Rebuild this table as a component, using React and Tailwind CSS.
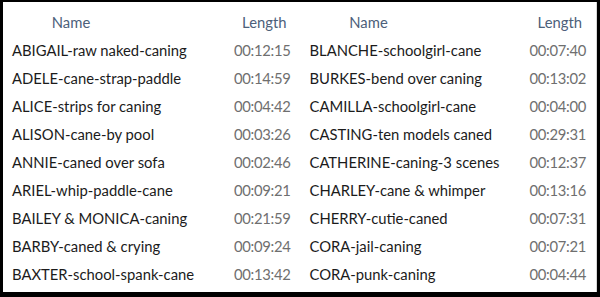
import React from "react";

const left = [
  ["ABIGAIL-raw naked-caning", "00:12:15"],
  ["ADELE-cane-strap-paddle", "00:14:59"],
  ["ALICE-strips for caning", "00:04:42"],
  ["ALISON-cane-by pool", "00:03:26"],
  ["ANNIE-caned over sofa", "00:02:46"],
  ["ARIEL-whip-paddle-cane", "00:09:21"],
  ["BAILEY & MONICA-caning", "00:21:59"],
  ["BARBY-caned & crying", "00:09:24"],
  ["BAXTER-school-spank-cane", "00:13:42"],
];

const right = [
  ["BLANCHE-schoolgirl-cane", "00:07:40"],
  ["BURKES-bend over caning", "00:13:02"],
  ["CAMILLA-schoolgirl-cane", "00:04:00"],
  ["CASTING-ten models caned", "00:29:31"],
  ["CATHERINE-caning-3 scenes", "00:12:37"],
  ["CHARLEY-cane & whimper", "00:13:16"],
  ["CHERRY-cutie-caned", "00:07:31"],
  ["CORA-jail-caning", "00:07:21"],
  ["CORA-punk-caning", "00:04:44"],
];

function Panel({ rows, first }) {
  return (
    <div className={first ? "pl-[9px] pr-[9px]" : "pl-[10px] pr-[10px]"}>
      <div className="flex h-[34px] items-end pb-[3px] text-[#4c607a]">
        <div className="w-[118px] text-center">Name</div>
        <div className="flex-1 text-right pr-[4px]">Length</div>
      </div>
      {rows.map(([name, len]) => (
        <div key={name} className="flex h-[28px] items-center">
          <div className="flex-1 text-[#1b1b1b] whitespace-nowrap">{name}</div>
          <div className="text-right text-[#6f6f6f] tracking-[-0.3px]">{len}</div>
        </div>
      ))}
    </div>
  );
}

export default function App() {
  return (
    <div
      className="w-[600px] h-[297px] bg-white border-black border-t-2 border-l-[3px] border-r-[3px] border-b-[5px] text-[14.8px]"
      style={{ fontFamily: 'Lato, "Open Sans", sans-serif' }}
    >
      <div className="h-full border-r border-[#d8d8d8] grid grid-cols-2">
        <Panel rows={left} first />
        <Panel rows={right} />
      </div>
    </div>
  );
}
